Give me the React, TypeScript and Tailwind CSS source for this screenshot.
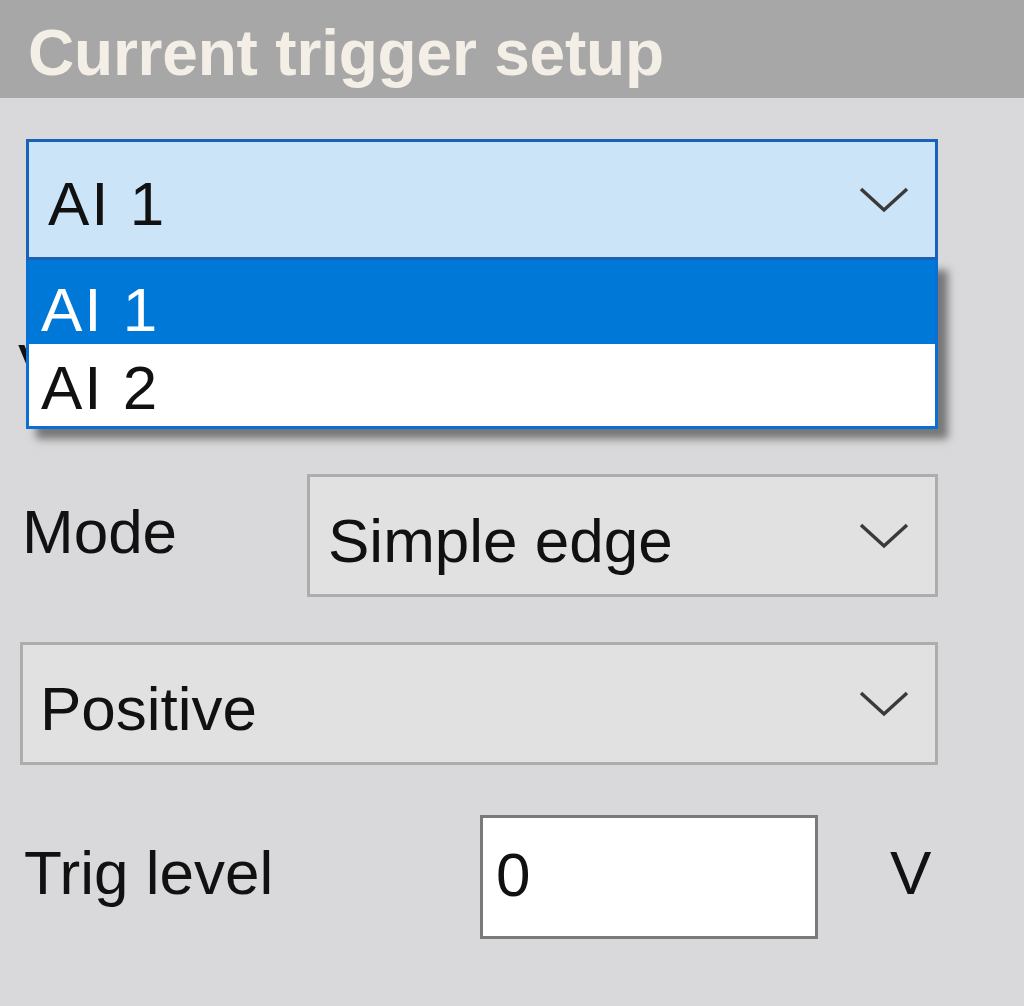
function Chevron() {
  return (
    <svg className="w-[50px] h-[28px] shrink-0" viewBox="0 0 50 28" fill="none">
      <path d="M2 3 L25 24 L48 3" stroke="#3a3a3a" strokeWidth="3.5" />
    </svg>
  );
}

function Combo({ value, className }: { value: string; className: string }) {
  return (
    <div
      className={`h-[123px] flex items-center justify-between border-[3px] border-[#adadad] bg-[#e1e1e1] pr-[26px] ${className}`}
    >
      <span className="text-[#111] pt-[10px]">{value}</span>
      <Chevron />
    </div>
  );
}

export default function App() {
  return (
    <div className="w-[1024px] h-[1006px] bg-[#d9d8da] overflow-hidden font-['Liberation_Sans',Arial,sans-serif] text-[62px] leading-none text-[#111]">
      <div className="h-[98px] bg-[#a7a7a7] flex items-center pl-[28px] pt-[8px]">
        <span className="font-bold text-[#f4efe6] text-[64px] tracking-[-0.2px]">Current trigger setup</span>
      </div>

      <div className="pt-[41px] pr-[86px] flex flex-col">
        {/* channel combo, opened */}
        <div className="relative ml-[26px]">
          <div className="h-[121px] flex items-center justify-between border-[3px] border-[#1a62b8] bg-[#cce4f7] pl-[19px] pr-[26px]">
            <span className="pt-[8px] tracking-[2px]">AI 1</span>
            <Chevron />
          </div>
          <div className="absolute left-0 right-0 top-full z-10 border-[3px] border-t-0 border-[#0a6fd4] bg-white shadow-[10px_10px_8px_rgba(40,40,40,0.55)]">
            <div className="h-[84px] bg-[#0078d7] text-white flex items-center pl-[12px] pt-[16px] tracking-[2px]">AI 1</div>
            <div className="h-[82px] bg-white flex items-center pl-[12px] pt-[6px] tracking-[2px]">AI 2</div>
          </div>
        </div>

        {/* row hidden behind the list */}
        <div className="h-[123px] mt-[46px] flex items-center pl-[18px]">
          <span className="pb-[4px]">V</span>
        </div>

        <div className="mt-[45px] flex items-center">
          <span className="w-[307px] pl-[22px] pb-[8px]">Mode</span>
          <Combo value="Simple edge" className="flex-1 pl-[18px]" />
        </div>

        <div className="mt-[45px] flex">
          <Combo value="Positive" className="flex-1 ml-[20px] pl-[17px]" />
        </div>

        <div className="mt-[50px] flex items-center">
          <span className="w-[480px] pl-[24px] pb-[8px]">Trig level</span>
          <div className="w-[338px] h-[124px] border-[3px] border-[#7a7a7a] bg-white flex items-center pl-[13px]">
            <span className="pb-[4px]">0</span>
          </div>
          <span className="ml-[72px] pb-[8px]">V</span>
        </div>
      </div>
    </div>
  );
}
